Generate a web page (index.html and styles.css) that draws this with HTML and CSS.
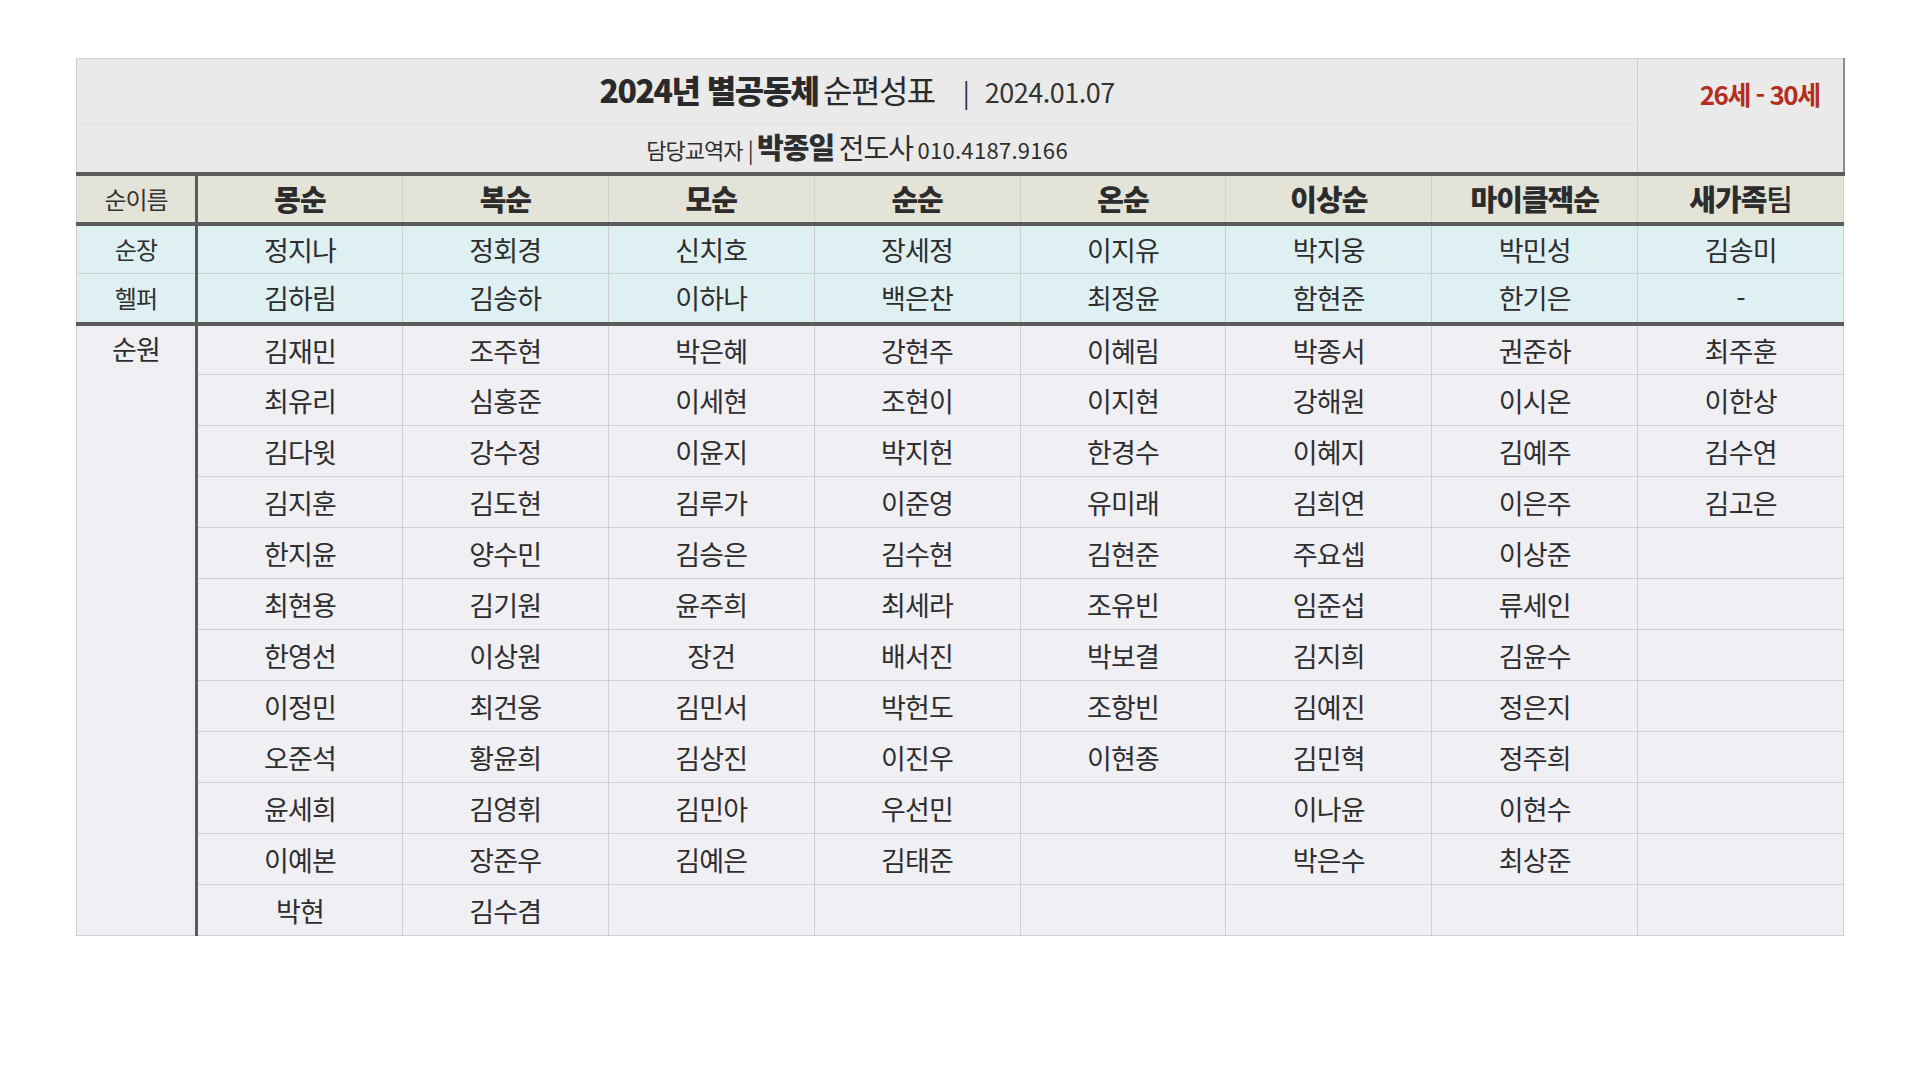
FILE: index.html
```html
<!DOCTYPE html>
<html lang="ko">
<head>
<meta charset="utf-8">
<title>2024년 별공동체 순편성표</title>
<link rel="stylesheet" href="styles.css">
</head>
<body>
<table class="roster">
  <colgroup>
    <col class="c-label">
    <col class="c-team"><col class="c-team"><col class="c-team"><col class="c-team">
    <col class="c-team"><col class="c-team"><col class="c-team"><col class="c-team">
  </colgroup>
  <tbody>
    <tr class="r-title">
      <td class="title" colspan="8"><span class="t-bold">2024년 별공동체</span> <span class="t-reg">순편성표</span><span class="t-sep">|</span><span class="t-date">2024.01.07</span></td>
      <td class="age" rowspan="2"><span class="age-txt">26세 - 30세</span></td>
    </tr>
    <tr class="r-sub">
      <td class="sub" colspan="8"><span class="s-small">담당교역자 |</span> <span class="s-name">박종일</span> <span class="s-role">전도사</span> <span class="s-phone">010.4187.9166</span></td>
    </tr>
    <tr class="r-head">
      <td class="lab">순이름</td>
      <td>몽순</td><td>복순</td><td>모순</td><td>순순</td><td>온순</td><td>이상순</td><td>마이클잭순</td><td>새가족<span class="thin">팀</span></td>
    </tr>
    <tr class="r-lead">
      <td class="lab">순장</td>
      <td>정지나</td><td>정회경</td><td>신치호</td><td>장세정</td><td>이지유</td><td>박지웅</td><td>박민성</td><td>김송미</td>
    </tr>
    <tr class="r-lead r-help">
      <td class="lab">헬퍼</td>
      <td>김하림</td><td>김송하</td><td>이하나</td><td>백은찬</td><td>최정윤</td><td>함현준</td><td>한기은</td><td>-</td>
    </tr>
    <tr class="r-mem r-first">
      <td class="lab lab-mem" rowspan="12">순원</td>
      <td>김재민</td><td>조주현</td><td>박은혜</td><td>강현주</td><td>이혜림</td><td>박종서</td><td>권준하</td><td>최주훈</td>
    </tr>
    <tr class="r-mem"><td>최유리</td><td>심홍준</td><td>이세현</td><td>조현이</td><td>이지현</td><td>강해원</td><td>이시온</td><td>이한상</td></tr>
    <tr class="r-mem"><td>김다윗</td><td>강수정</td><td>이윤지</td><td>박지헌</td><td>한경수</td><td>이혜지</td><td>김예주</td><td>김수연</td></tr>
    <tr class="r-mem"><td>김지훈</td><td>김도현</td><td>김루가</td><td>이준영</td><td>유미래</td><td>김희연</td><td>이은주</td><td>김고은</td></tr>
    <tr class="r-mem"><td>한지윤</td><td>양수민</td><td>김승은</td><td>김수현</td><td>김현준</td><td>주요셉</td><td>이상준</td><td></td></tr>
    <tr class="r-mem"><td>최현용</td><td>김기원</td><td>윤주희</td><td>최세라</td><td>조유빈</td><td>임준섭</td><td>류세인</td><td></td></tr>
    <tr class="r-mem"><td>한영선</td><td>이상원</td><td>장건</td><td>배서진</td><td>박보결</td><td>김지희</td><td>김윤수</td><td></td></tr>
    <tr class="r-mem"><td>이정민</td><td>최건웅</td><td>김민서</td><td>박헌도</td><td>조항빈</td><td>김예진</td><td>정은지</td><td></td></tr>
    <tr class="r-mem"><td>오준석</td><td>황윤희</td><td>김상진</td><td>이진우</td><td>이현종</td><td>김민혁</td><td>정주희</td><td></td></tr>
    <tr class="r-mem"><td>윤세희</td><td>김영휘</td><td>김민아</td><td>우선민</td><td></td><td>이나윤</td><td>이현수</td><td></td></tr>
    <tr class="r-mem"><td>이예본</td><td>장준우</td><td>김예은</td><td>김태준</td><td></td><td>박은수</td><td>최상준</td><td></td></tr>
    <tr class="r-mem"><td>박현</td><td>김수겸</td><td></td><td></td><td></td><td></td><td></td><td></td></tr>
  </tbody>
</table>
</body>
</html>
```

FILE: styles.css
```css
html, body {
  margin: 0;
  padding: 0;
  background: #ffffff;
}

body {
  font-family: "Noto Sans CJK KR", "Noto Sans", sans-serif;
  color: #2e2e2e;
}

.roster {
  margin: 58px 0 0 76px;
  width: 1767px;
  table-layout: fixed;
  border-collapse: collapse;
  border: 1px solid #cfcfcf;
}

.c-label { width: 120px; }
.c-team { width: 205.875px; }

.roster td {
  padding: 0;
  text-align: center;
  vertical-align: middle;
  border: 1px solid #cfcfcf;
  line-height: 1;
  white-space: nowrap;
}

/* ---------- header ---------- */
.r-title td, .r-sub td {
  background: #eaeaea;
}

.r-title { height: 65px; }
.r-sub { height: 50px; }

.title {
  border-bottom: 1px solid #e2e2e2 !important;
  padding-bottom: 4px !important;
}

.t-bold {
  font-size: 32px;
  font-weight: 900;
  letter-spacing: -1.5px;
  color: #2a2a2a;
}

.t-reg {
  font-size: 32px;
  font-weight: 400;
  letter-spacing: -1.5px;
  color: #2a2a2a;
}

.t-sep {
  font-size: 26px;
  margin: 0 15px 0 28px;
  color: #333;
}

.t-date {
  font-size: 27px;
  letter-spacing: -0.5px;
  color: #333;
}

.sub {
  padding-bottom: 2px !important;
}

.s-small {
  font-size: 22px;
  letter-spacing: -1px;
}

.s-name {
  font-size: 29px;
  font-weight: 900;
  letter-spacing: -1px;
}

.s-role {
  font-size: 28px;
  letter-spacing: -1px;
}

.s-phone {
  font-size: 22px;
  letter-spacing: 0.3px;
}

.age {
  background: #eaeaea;
  text-align: right !important;
  vertical-align: top !important;
  padding: 22px 23px 0 0 !important;
  border-right: 2px solid #8a8a8a !important;
}

.age-txt {
  font-size: 26px;
  font-weight: 700;
  letter-spacing: -1.5px;
  color: #b32e1d;
}

/* ---------- column heads ---------- */
.r-head { height: 50px; }

.r-head td {
  background: #e3e3d8;
  font-size: 29px;
  font-weight: 900;
  letter-spacing: -1px;
  color: #2c2c2c;
  border-top: 4px solid #5b5b5b;
  border-bottom: 4px solid #5b5b5b;
}

.r-head td.lab {
  font-size: 24px;
  font-weight: 400;
  color: #333;
}

.thin { font-weight: 500; }

/* ---------- leader rows ---------- */
.r-lead { height: 50px; }

.r-lead td {
  background: #dff0f3;
  font-size: 27px;
  letter-spacing: -0.8px;
}

.r-lead td.lab {
  font-size: 24px;
}

.r-help td {
  border-bottom: 4px solid #5b5b5b;
}

/* ---------- member rows ---------- */
.r-mem { height: 51px; }

.r-mem td {
  background: #f0eff4;
  font-size: 27px;
  letter-spacing: -0.8px;
  padding-top: 1px;
}

.lab {
  border-right: 3px solid #5b5b5b !important;
  font-size: 24px;
  letter-spacing: -0.5px;
}

.lab-mem {
  vertical-align: top !important;
  padding-top: 9px !important;
}
```
